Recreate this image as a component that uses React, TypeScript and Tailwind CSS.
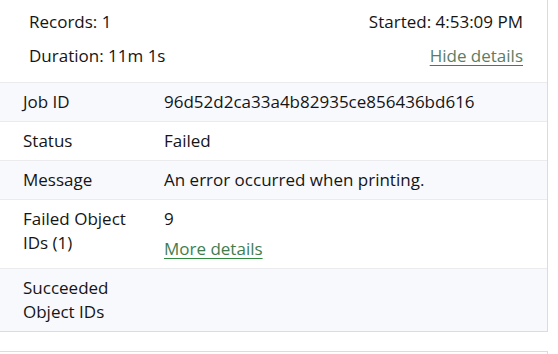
import React from "react";

export default function App() {
  const font = { fontFamily: "'Open Sans', 'Noto Sans', sans-serif" };
  return (
    <div className="w-[558px] h-[354px] bg-white text-[17px] text-[#151515]" style={font}>
      <div className="w-[548px] border-r border-b border-[#dcdcdc]">
        <div className="flex flex-col gap-[10px] pt-[10px] pb-[14px] pl-[29px] pr-[24px] border-b border-[#ebebee]">
          <div className="flex justify-between leading-[24px]">
            <span>Records: 1</span>
            <span>Started: 4:53:09 PM</span>
          </div>
          <div className="flex justify-between leading-[24px]">
            <span>Duration: 11m 1s</span>
            <a className="text-[#5b7d64] underline decoration-[#2f8a3f] underline-offset-[3px] cursor-pointer">Hide details</a>
          </div>
        </div>
        <div className="grid grid-cols-[164px_1fr] leading-[24px]">
          <div className="contents">
            <div className="bg-[#f8f9fd] pl-[23px] py-[7px] border-b border-[#ebebee]">Job ID</div>
            <div className="bg-[#f8f9fd] py-[7px] border-b border-[#ebebee]">96d52d2ca33a4b82935ce856436bd616</div>
          </div>
          <div className="contents">
            <div className="bg-white pl-[23px] py-[7px] border-b border-[#ebebee]">Status</div>
            <div className="bg-white py-[7px] border-b border-[#ebebee]">Failed</div>
          </div>
          <div className="contents">
            <div className="bg-[#f8f9fd] pl-[23px] py-[7px] border-b border-[#ebebee]">Message</div>
            <div className="bg-[#f8f9fd] py-[7px] border-b border-[#ebebee]">An error occurred when printing.</div>
          </div>
          <div className="contents">
            <div className="bg-white pl-[23px] pr-[10px] py-[7px] border-b border-[#ebebee]">Failed Object IDs (1)</div>
            <div className="bg-white py-[7px] border-b border-[#ebebee] flex flex-col gap-[6px] items-start">
              <span>9</span>
              <a className="text-[#3f7d4f] underline decoration-[#2f8a3f] underline-offset-[3px] cursor-pointer">More details</a>
            </div>
          </div>
          <div className="contents">
            <div className="bg-[#f8f9fd] pl-[23px] pr-[10px] py-[7px]">Succeeded Object IDs</div>
            <div className="bg-[#f8f9fd] py-[7px]"></div>
          </div>
        </div>
      </div>
      <div className="mt-[19px] w-[548px] h-[10px] border-t border-r border-[#dcdcdc]"></div>
    </div>
  );
}
